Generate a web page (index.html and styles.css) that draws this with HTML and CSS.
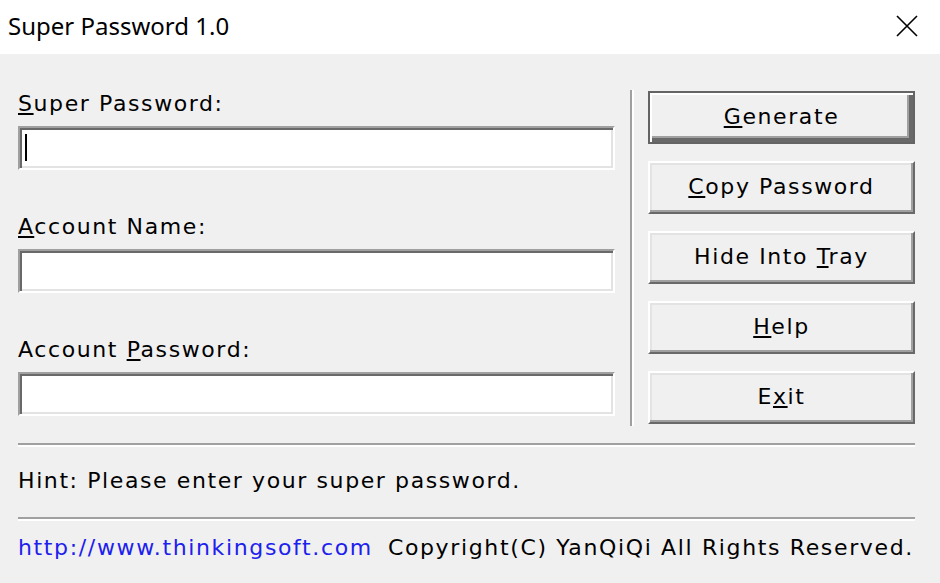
FILE: index.html
```html
<!DOCTYPE html>
<html>
<head>
<meta charset="utf-8">
<link rel="stylesheet" href="styles.css">
</head>
<body>
<div class="window">
  <div class="titlebar">
    <span class="title">Super Password 1.0</span>
    <svg class="close" width="24" height="24" viewBox="0 0 24 24"><path d="M2 2 L22 22 M22 2 L2 22" stroke="#000" stroke-width="1.6" fill="none"/></svg>
  </div>
  <div class="client">
    <div class="top">
      <div class="fields">
        <div class="group">
          <div class="label"><u>S</u>uper Password:</div>
          <div class="input"><span class="caret"></span></div>
        </div>
        <div class="group">
          <div class="label"><u>A</u>ccount Name:</div>
          <div class="input"></div>
        </div>
        <div class="group">
          <div class="label">Account <u>P</u>assword:</div>
          <div class="input"></div>
        </div>
      </div>
      <div class="vsep"></div>
      <div class="buttons">
        <div class="btn default"><span><u>G</u>enerate</span></div>
        <div class="btn"><span><u>C</u>opy Password</span></div>
        <div class="btn"><span>Hide Into <u>T</u>ray</span></div>
        <div class="btn"><span><u>H</u>elp</span></div>
        <div class="btn"><span>E<u>x</u>it</span></div>
      </div>
    </div>
    <div class="hsep sep1"></div>
    <div class="hint">Hint: Please enter your super password.</div>
    <div class="hsep sep2"></div>
    <div class="footer"><span class="link">http://www.thinkingsoft.com</span><span class="copy">Copyright(C) YanQiQi All Rights Reserved.</span></div>
  </div>
</div>
</body>
</html>
```
FILE: styles.css
```css
html, body {
  margin: 0;
  padding: 0;
  background: #f0f0f0;
}
.window {
  width: 940px;
  height: 583px;
  overflow: hidden;
  background: #f0f0f0;
  font-family: "DejaVu Sans", sans-serif;
  font-size: 22px;
  letter-spacing: 1.6px;
  color: #000;
}
.titlebar {
  height: 54px;
  background: #fff;
  display: flex;
  align-items: center;
  justify-content: space-between;
  padding: 0 21px 0 8px;
}
.title {
  font-family: "Noto Sans", "Open Sans", sans-serif;
  font-size: 24px;
  letter-spacing: 0;
  color: #000;
  margin-top: -3px;
}
.close {
  display: block;
  margin-top: -2px;
}
.client {
  padding: 36px 25px 0 18px;
}
.top {
  display: flex;
  height: 336px;
}
.fields {
  width: 597px;
  display: flex;
  flex-direction: column;
  gap: 45px;
  padding-top: 2px;
}
.label {
  height: 24px;
  line-height: 24px;
  margin-bottom: 10px;
  white-space: nowrap;
}
.input {
  height: 44px;
  box-sizing: border-box;
  background: #fff;
  border: 2px solid;
  border-color: #a0a0a0 #fff #fff #a0a0a0;
  box-shadow: inset 2px 2px 0 #696969, inset -2px -2px 0 #e3e3e3;
  position: relative;
}
.caret {
  position: absolute;
  left: 5px;
  top: 6px;
  width: 2px;
  height: 27px;
  background: #000;
}
.vsep {
  margin-left: 15px;
  border-left: 2px solid #a0a0a0;
  border-right: 2px solid #fff;
  box-sizing: border-box;
  width: 4px;
}
.buttons {
  margin-left: 14px;
  flex: 1;
  display: flex;
  flex-direction: column;
  gap: 17px;
  padding-top: 1px;
}
.btn {
  height: 53px;
  box-sizing: border-box;
  border: 2px solid;
  border-color: #fff #696969 #696969 #fff;
  box-shadow: inset -2px -2px 0 #a0a0a0, inset 2px 2px 0 #e3e3e3;
  background: #f0f0f0;
  display: flex;
  align-items: center;
  justify-content: center;
  white-space: nowrap;
}
.btn.default {
  border: 2px solid #646464;
  box-shadow: inset 2px 2px 0 #fff, inset -4px -4px 0 #696969, inset -6px -6px 0 #a0a0a0;
}
.btn span {
  margin-top: -2px;
}
u {
  text-decoration: underline;
  text-underline-offset: 2px;
  text-decoration-thickness: 2px;
}
.hsep {
  height: 4px;
  box-sizing: border-box;
  border-top: 2px solid #a0a0a0;
  border-bottom: 2px solid #fff;
  width: 897px;
}
.sep1 {
  margin-top: 17px;
}
.hint {
  height: 72px;
  line-height: 72px;
  margin-top: -2px;
  white-space: nowrap;
}
.footer {
  display: flex;
  gap: 15px;
  margin-top: 15px;
  white-space: nowrap;
  line-height: 24px;
  letter-spacing: 1.64px;
}
.link {
  color: #2020ee;
}
```
